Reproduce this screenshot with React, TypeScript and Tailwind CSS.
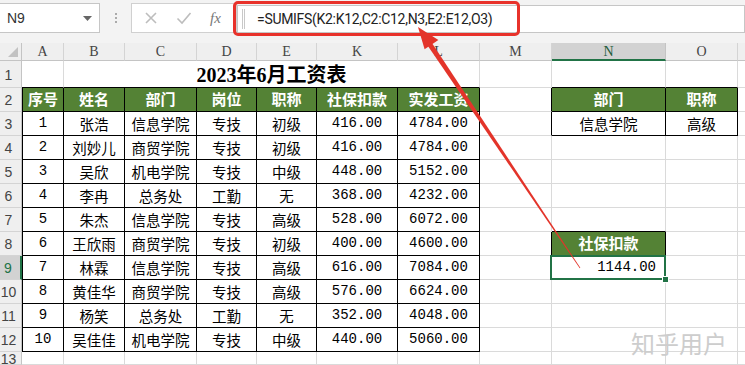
const rows = [
  ["1", "张浩", "信息学院", "专技", "初级", "416.00", "4784.00"],
  ["2", "刘妙儿", "商贸学院", "专技", "初级", "416.00", "4784.00"],
  ["3", "吴欣", "机电学院", "专技", "中级", "448.00", "5152.00"],
  ["4", "李冉", "总务处", "工勤", "无", "368.00", "4232.00"],
  ["5", "朱杰", "信息学院", "专技", "高级", "528.00", "6072.00"],
  ["6", "王欣雨", "商贸学院", "专技", "初级", "400.00", "4600.00"],
  ["7", "林霖", "信息学院", "专技", "高级", "616.00", "7084.00"],
  ["8", "黄佳华", "商贸学院", "专技", "高级", "576.00", "6624.00"],
  ["9", "杨笑", "总务处", "工勤", "无", "352.00", "4048.00"],
  ["10", "吴佳佳", "机电学院", "专技", "中级", "440.00", "5060.00"],
];

const heads = ["序号", "姓名", "部门", "岗位", "职称", "社保扣款", "实发工资"];
const letters = ["A", "B", "C", "D", "E", "K", "L", "M", "N", "O"];

const cjk = "font-['Noto_Sans_CJK_SC',sans-serif]";
const mono = "font-['Liberation_Mono','Noto_Sans_CJK_SC',monospace]";

// right / bottom border colours
const RB = { g: "border-r border-r-[#dadada]", k: "border-r border-r-black", n: "" };
const BB = { g: "border-b border-b-[#dadada]", k: "border-b border-b-black" };

function Cell({
  r = "g",
  b = "g",
  left = false,
  className = "",
  children,
}: {
  r?: "g" | "k" | "n";
  b?: "g" | "k";
  left?: boolean;
  className?: string;
  children?: React.ReactNode;
}) {
  return (
    <div
      className={`${RB[r]} ${BB[b]} ${left ? "border-l border-l-black" : ""} flex items-center justify-center overflow-hidden whitespace-nowrap ${className}`}
    >
      {children}
    </div>
  );
}

function RowHead({ n, sel = false }: { n: string; sel?: boolean }) {
  return (
    <div
      className={`border-b border-b-[#d4d4d4] flex items-center justify-center pr-[4px] pt-[2px] font-['Liberation_Sans',sans-serif] text-[14px] ${
        sel
          ? "bg-[#d2d2d2] text-[#217346] border-r-2 border-r-[#217346]"
          : "bg-[#efefef] text-[#444] border-r border-r-[#c4c4c4]"
      }`}
    >
      {n}
    </div>
  );
}

function Green({ children, r = "k" as "k" | "g", left = false }: { children: React.ReactNode; r?: "k" | "g"; left?: boolean }) {
  return (
    <Cell r={r} b="k" left={left} className={`bg-[#548235] text-white font-bold text-[15px] ${cjk}`}>
      {children}
    </Cell>
  );
}

export default function App() {
  return (
    <div className="relative w-[745px] h-[365px] overflow-hidden bg-white">
      {/* formula bar */}
      <div className="h-[43px] bg-[#f3f3f3] flex items-start pt-[3px]">
        <div className="ml-[-1px] w-[101px] h-[30px] bg-white border border-[#c6c6c6] flex items-center justify-between pl-[7px] pr-[7px] font-['Liberation_Sans',sans-serif] text-[14px] text-[#333]">
          <span>N9</span>
          <svg width="9" height="5" viewBox="0 0 9 5">
            <path d="M0 0h9L4.5 5z" fill="#666" />
          </svg>
        </div>
        <div className="w-[31px] h-[30px] flex flex-col items-center justify-center gap-[2px]">
          <span className="w-[2px] h-[2px] bg-[#aaa]" />
          <span className="w-[2px] h-[2px] bg-[#aaa]" />
          <span className="w-[2px] h-[2px] bg-[#aaa]" />
        </div>
        <div className="w-[106px] h-[30px] bg-white border border-[#d0d0d0] flex items-center pl-[12px] gap-[18px]">
          <svg width="14" height="14" viewBox="0 0 14 14">
            <path d="M2 2l10 10M12 2L2 12" stroke="#bdbdbd" strokeWidth="1.6" />
          </svg>
          <svg width="16" height="14" viewBox="0 0 16 14">
            <path d="M1.5 7.5l4.5 4.5L14.5 2" stroke="#bdbdbd" strokeWidth="1.6" fill="none" />
          </svg>
          <span className="font-['Liberation_Serif',serif] italic text-[15px] text-[#777]">fx</span>
        </div>
        <div className="flex-1 h-[28px] mt-[2px] bg-white border border-[#c6c6c6] flex items-center">
          <div className="ml-[4px] w-[3px] h-[20px] border-x border-[#c8c8c8]" />
          <span className="ml-[12px] font-['Roboto',sans-serif] text-[14px] text-[#222] tracking-[-0.3px]">
            =SUMIFS(K2:K12,C2:C12,N3,E2:E12,O3)
          </span>
        </div>
      </div>

      {/* sheet */}
      <div className="grid grid-cols-[22px_42px_61px_72px_60px_60px_81px_82px_72px_114px_72px_7px] grid-rows-[18px_27px_repeat(11,24px)_13px]">
        {/* column headers */}
        <div className="bg-[#efefef] border-r border-b border-[#c4c4c4] relative">
          <svg className="absolute right-[3px] bottom-[3px]" width="10" height="10" viewBox="0 0 10 10">
            <path d="M10 0V10H0z" fill="#c2c2c2" />
          </svg>
        </div>
        {letters.map((l) => (
          <div
            key={l}
            className={`flex items-center justify-center font-['Liberation_Serif',serif] text-[14px] ${
              l === "N"
                ? "bg-[#d2d2d2] text-[#1f5c3a] border-b-2 border-b-[#217346] border-r border-r-[#c4c4c4]"
                : "bg-[#efefef] text-[#444] border-b border-b-[#c4c4c4] border-r border-r-[#d4d4d4]"
            }`}
          >
            {l}
          </div>
        ))}
        <div className="bg-[#efefef] border-b border-b-[#c4c4c4]" />

        {/* row 1 */}
        <RowHead n="1" />
        <Cell r="g" b="k" />
        <div className="col-span-6 border-r border-r-[#dadada] border-b border-b-black flex items-center justify-center pt-[2px] font-['Liberation_Serif','Noto_Sans_CJK_SC',serif] font-bold text-[20px] text-black">
          2023年6月工资表
        </div>
        <Cell />
        <Cell b="k" />
        <Cell b="k" />
        <Cell r="n" />

        {/* row 2 */}
        <RowHead n="2" />
        {heads.map((h, i) => (
          <Green key={h} left={i === 0}>
            {h}
          </Green>
        ))}
        <Cell r="k" />
        <Green>部门</Green>
        <Green>职称</Green>
        <Cell r="n" />

        {/* data rows 3-12 */}
        {rows.map((d, i) => {
          const n = i + 3;
          return [
            <RowHead key={`h${n}`} n={String(n)} sel={n === 9} />,
            ...d.map((v, j) => (
              <Cell
                key={`${n}-${j}`}
                r="k"
                b="k"
                left={j === 0}
                className={`text-black ${j === 0 || j >= 5 ? `${mono} text-[14px]` : `${cjk} text-[14.5px]`}`}
              >
                {v}
              </Cell>
            )),
            <Cell key={`m${n}`} r={n === 3 || n === 8 ? "k" : "g"} />,
            n === 3 ? (
              <Cell key={`n${n}`} r="k" b="k" className={`${cjk} text-[14.5px] text-black`}>
                信息学院
              </Cell>
            ) : n === 8 ? (
              <Green key={`n${n}`}>社保扣款</Green>
            ) : n === 9 ? (
              <div key={`n${n}`} className="relative border-r border-b border-r-[#dadada] border-b-[#dadada] flex items-center justify-end pr-[9px]">
                <span className={`${mono} text-[14px] text-black`}>1144.00</span>
                <div className="absolute -top-[1px] -left-[2px] -right-[1px] -bottom-[1px] border-2 border-[#217346]" />
                <div className="absolute -right-[4px] -bottom-[4px] w-[7px] h-[7px] bg-[#217346] border border-white" />
              </div>
            ) : (
              <Cell key={`n${n}`} b={n === 7 ? "k" : "g"} />
            ),
            n === 3 ? (
              <Cell key={`o${n}`} r="k" b="k" className={`${cjk} text-[14.5px] text-black`}>
                高级
              </Cell>
            ) : (
              <Cell key={`o${n}`} />
            ),
            <Cell key={`t${n}`} r="n" />,
          ];
        })}

        {/* row 13 */}
        <RowHead n="13" />
        {letters.map((l) => (
          <Cell key={`r13${l}`} />
        ))}
        <Cell r="n" />
      </div>

      {/* red highlight box around formula */}
      <div className="absolute left-[233px] top-[1px] w-[287px] h-[35px] border-[3px] border-[#e8322b] rounded-[5px] pointer-events-none" />

      {/* red arrow */}
      <svg className="absolute left-0 top-0 pointer-events-none" width="745" height="365" viewBox="0 0 745 365">
        <polygon points="427.9,46.1 432.1,43.3 580.3,267.8 579.7,268.2" fill="#e3342a" />
        <polygon points="418,27 438.4,39.9 424.6,49.2" fill="#e3342a" />
      </svg>

      {/* watermark */}
      <div className={`absolute left-[631px] top-[325px] ${cjk} text-[24px] text-[#cdcdcd]`}>知乎用户</div>
    </div>
  );
}
